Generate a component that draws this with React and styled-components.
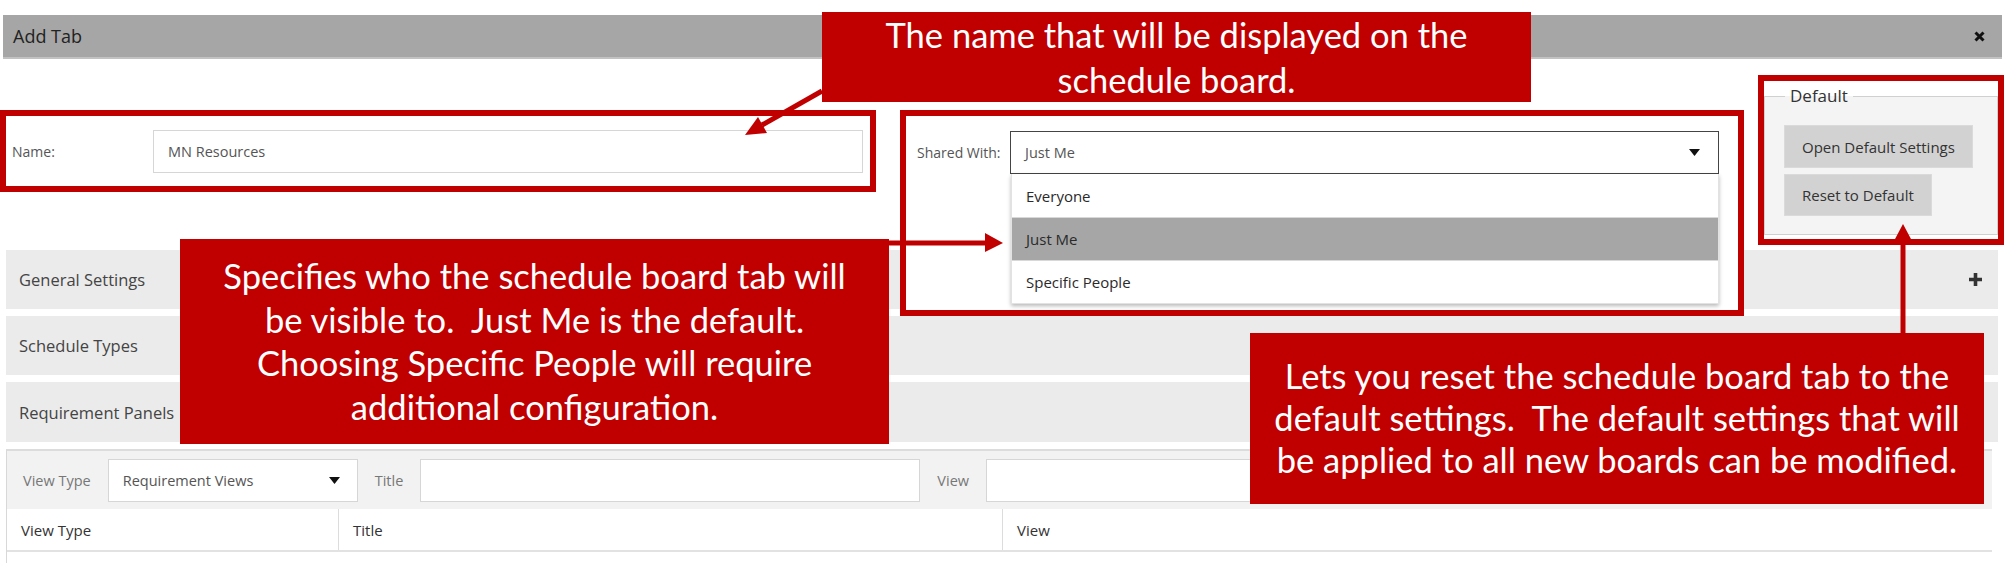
import React from 'react'
import styled, { createGlobalStyle } from 'styled-components'

const RED = '#c00000'

const GlobalStyle = createGlobalStyle`
  html, body {
    margin: 0;
    padding: 0;
    background: #fff;
  }
  body {
    font-family: "Open Sans", "Noto Sans", "Liberation Sans", sans-serif;
    color: #444;
  }
`

const Page = styled.div`
  position: relative;
  width: 2006px;
  height: 563px;
  overflow: hidden;
  background: #fff;
  padding-top: 15px;
  box-sizing: border-box;
`

const TitleBar = styled.div`
  margin: 0 4px 0 3px;
  height: 44px;
  box-sizing: border-box;
  background: #a6a6a6;
  border-bottom: 2px solid #c2c2c2;
  display: flex;
  align-items: center;
  justify-content: space-between;
  padding: 0 17px 0 10px;
  font-size: 18px;
  color: #222;
`

const TopSection = styled.div`
  display: flex;
  align-items: flex-start;
  height: 191px;
`

const Highlight = styled.div`
  box-sizing: border-box;
  border: 6px solid ${RED};
  background: #fff;
  margin-top: ${p => p.$top}px;
  margin-left: ${p => p.$left || 0}px;
  width: ${p => p.$w}px;
  height: ${p => p.$h}px;
  position: relative;
  z-index: 2;
`

const NameRow = styled.div`
  display: flex;
  align-items: center;
  height: 100%;
  padding: 0 7px 0 6px;
`

const Label = styled.span`
  font-size: 14px;
  color: #555;
  width: ${p => p.$w ? `${p.$w}px` : 'auto'};
  flex-shrink: 0;
`

const TextInput = styled.div`
  flex: 1;
  height: 43px;
  box-sizing: border-box;
  border: 1px solid #d6d6d6;
  background: #fff;
  display: flex;
  align-items: center;
  padding-left: 14px;
  font-size: 14.5px;
  color: #555;
`

const SharedGrid = styled.div`
  display: grid;
  grid-template-columns: 93px 709px;
  padding: 15px 0 0 11px;
  align-items: center;
`

const Select = styled.div`
  height: 43px;
  box-sizing: border-box;
  border: 1px solid ${p => p.$dark ? '#444' : '#d6d6d6'};
  background: #fff;
  display: flex;
  align-items: center;
  justify-content: space-between;
  padding: 0 ${p => p.$pr || 18}px 0 14px;
  font-size: 14.5px;
  color: #555;
  width: ${p => p.$w ? `${p.$w}px` : 'auto'};
`

const OptionList = styled.div`
  grid-column: 2;
  margin-left: 1px;
  background: #fff;
  border: 1px solid #e2e2e2;
  border-top: none;
  box-shadow: 0 2px 4px rgba(0, 0, 0, 0.28);
`

const Option = styled.div`
  height: 43px;
  box-sizing: border-box;
  display: flex;
  align-items: center;
  padding-left: 14px;
  font-size: 15px;
  color: #2a2a2a;
  background: ${p => p.$selected ? '#a6a6a6' : '#fff'};
  border-top: ${p => p.$first ? 'none' : '1px solid #d8d8d8'};
`

const Fieldset = styled.fieldset`
  margin: 4px 0 0 0;
  height: 150px;
  box-sizing: border-box;
  border: 1px solid #d0d0d0;
  background: #f4f4f4;
  padding: 18px 0 0 19px;
  display: flex;
  flex-direction: column;
  align-items: flex-start;
  gap: 6px;
`

const Legend = styled.legend`
  font-size: 17px;
  line-height: 22px;
  color: #333;
  padding: 0 5px;
  margin-left: 1px;
`

const GrayButton = styled.div`
  height: ${p => p.$h}px;
  box-sizing: border-box;
  background: #d2d2d2;
  border: 1px solid #dadada;
  display: flex;
  align-items: center;
  padding: 0 17px;
  font-size: 15px;
  color: #333;
`

const Rows = styled.div`
  display: flex;
  flex-direction: column;
  gap: 7px;
  padding: 0 8px 0 6px;
`

const SectionRow = styled.div`
  height: ${p => p.$h || 59}px;
  background: #ebebeb;
  display: flex;
  align-items: center;
  justify-content: space-between;
  padding: 0 15px 0 13px;
  font-size: 16.5px;
  color: #444;
`

const Panel = styled.div`
  margin: 7px 14px 0 6px;
  border-left: 1px solid #d8d8d8;
  border-top: 2px solid #dcdcdc;
  height: 200px;
`

const Toolbar = styled.div`
  height: 58px;
  background: #f2f2f2;
  display: flex;
  align-items: center;
  gap: 17px;
  padding-left: 16px;
`

const SmallLabel = styled.span`
  font-size: 14.5px;
  color: #777;
`

const PlainInput = styled.div`
  height: 43px;
  box-sizing: border-box;
  border: 1px solid #d6d6d6;
  background: #fff;
  width: ${p => p.$w}px;
  flex-shrink: 0;
`

const TableHead = styled.div`
  display: grid;
  grid-template-columns: 331px 664px 1fr;
  height: 41px;
  border-bottom: 2px solid #e2e2e2;
  background: #fff;
`

const HeadCell = styled.div`
  display: flex;
  align-items: center;
  padding-left: 14px;
  font-size: 15px;
  color: #333;
  border-left: ${p => p.$divider ? '1px solid #dcdcdc' : 'none'};
`

const Callout = styled.div`
  position: absolute;
  left: ${p => p.$x}px;
  top: ${p => p.$y}px;
  width: ${p => p.$w}px;
  height: ${p => p.$h}px;
  box-sizing: border-box;
  background: ${RED};
  color: #fff;
  font-family: Lato, "Open Sans", sans-serif;
  font-size: 34.5px;
  line-height: ${p => p.$lh}px;
  text-align: center;
  padding-top: ${p => p.$pt || 0}px;
  z-index: 5;
  white-space: nowrap;
`

const Overlay = styled.svg`
  position: absolute;
  left: 0;
  top: 0;
  z-index: 6;
  pointer-events: none;
`

const Caret = () => (
  <svg width="11" height="7" viewBox="0 0 11 7">
    <polygon points="0,0 11,0 5.5,7" fill="#111" />
  </svg>
)

const CloseIcon = () => (
  <svg width="11" height="11" viewBox="0 0 11 11">
    <path d="M1.5 1.5 L9.5 9.5 M9.5 1.5 L1.5 9.5" stroke="#111" strokeWidth="3" />
  </svg>
)

const PlusIcon = () => (
  <svg width="15" height="15" viewBox="0 0 15 15">
    <path d="M7.5 1 V14 M1 7.5 H14" stroke="#333" strokeWidth="3.6" />
  </svg>
)

export default function App() {
  return (
    <Page>
      <GlobalStyle />
      <TitleBar>
        <span>Add Tab</span>
        <CloseIcon />
      </TitleBar>

      <TopSection>
        <Highlight $top={51} $w={876} $h={82}>
          <NameRow>
            <Label $w={141}>Name:</Label>
            <TextInput>MN Resources</TextInput>
          </NameRow>
        </Highlight>

        <Highlight $top={51} $left={24} $w={844} $h={206}>
          <SharedGrid>
            <Label>Shared With:</Label>
            <Select $dark>
              <span>Just Me</span>
              <Caret />
            </Select>
            <OptionList>
              <Option $first>Everyone</Option>
              <Option $selected>Just Me</Option>
              <Option>Specific People</Option>
            </OptionList>
          </SharedGrid>
        </Highlight>

        <Highlight $top={16} $left={14} $w={246} $h={170}>
          <Fieldset>
            <Legend>Default</Legend>
            <GrayButton $h={43}>Open Default Settings</GrayButton>
            <GrayButton $h={42}>Reset to Default</GrayButton>
          </Fieldset>
        </Highlight>
      </TopSection>

      <Rows>
        <SectionRow>
          <span>General Settings</span>
          <PlusIcon />
        </SectionRow>
        <SectionRow>
          <span>Schedule Types</span>
        </SectionRow>
        <SectionRow $h={60}>
          <span>Requirement Panels</span>
        </SectionRow>
      </Rows>

      <Panel>
        <Toolbar>
          <SmallLabel>View Type</SmallLabel>
          <Select $w={250} $pr={17}>
            <span>Requirement Views</span>
            <Caret />
          </Select>
          <SmallLabel>Title</SmallLabel>
          <PlainInput $w={500} />
          <SmallLabel>View</SmallLabel>
          <PlainInput $w={995} />
        </Toolbar>
        <TableHead>
          <HeadCell>View Type</HeadCell>
          <HeadCell $divider>Title</HeadCell>
          <HeadCell $divider>View</HeadCell>
        </TableHead>
      </Panel>

      <Callout $x={822} $y={12} $w={709} $h={90} $lh={45}>
        The name that will be displayed on the
        <br />
        schedule board.
      </Callout>

      <Callout $x={180} $y={239} $w={709} $h={205} $lh={43.5} $pt={15}>
        Specifies who the schedule board tab will
        <br />
        be visible to.&nbsp; Just Me is the default.
        <br />
        Choosing Specific People will require
        <br />
        additional configuration.
      </Callout>

      <Callout $x={1250} $y={333} $w={734} $h={171} $lh={42} $pt={22}>
        Lets you reset the schedule board tab to the
        <br />
        default settings.&nbsp; The default settings that will
        <br />
        be applied to all new boards can be modified.
      </Callout>

      <Overlay width="2006" height="563" viewBox="0 0 2006 563">
        <line x1="822" y1="91" x2="762" y2="125" stroke={RED} strokeWidth="5" />
        <polygon points="745,135 767,133 758,117" fill={RED} />

        <line x1="889" y1="243" x2="987" y2="243" stroke={RED} strokeWidth="5" />
        <polygon points="985,233 1003,243 985,252" fill={RED} />

        <line x1="1903" y1="333" x2="1903" y2="237" stroke={RED} strokeWidth="5" />
        <polygon points="1895,239 1903,224 1911,239" fill={RED} />
      </Overlay>
    </Page>
  )
}
